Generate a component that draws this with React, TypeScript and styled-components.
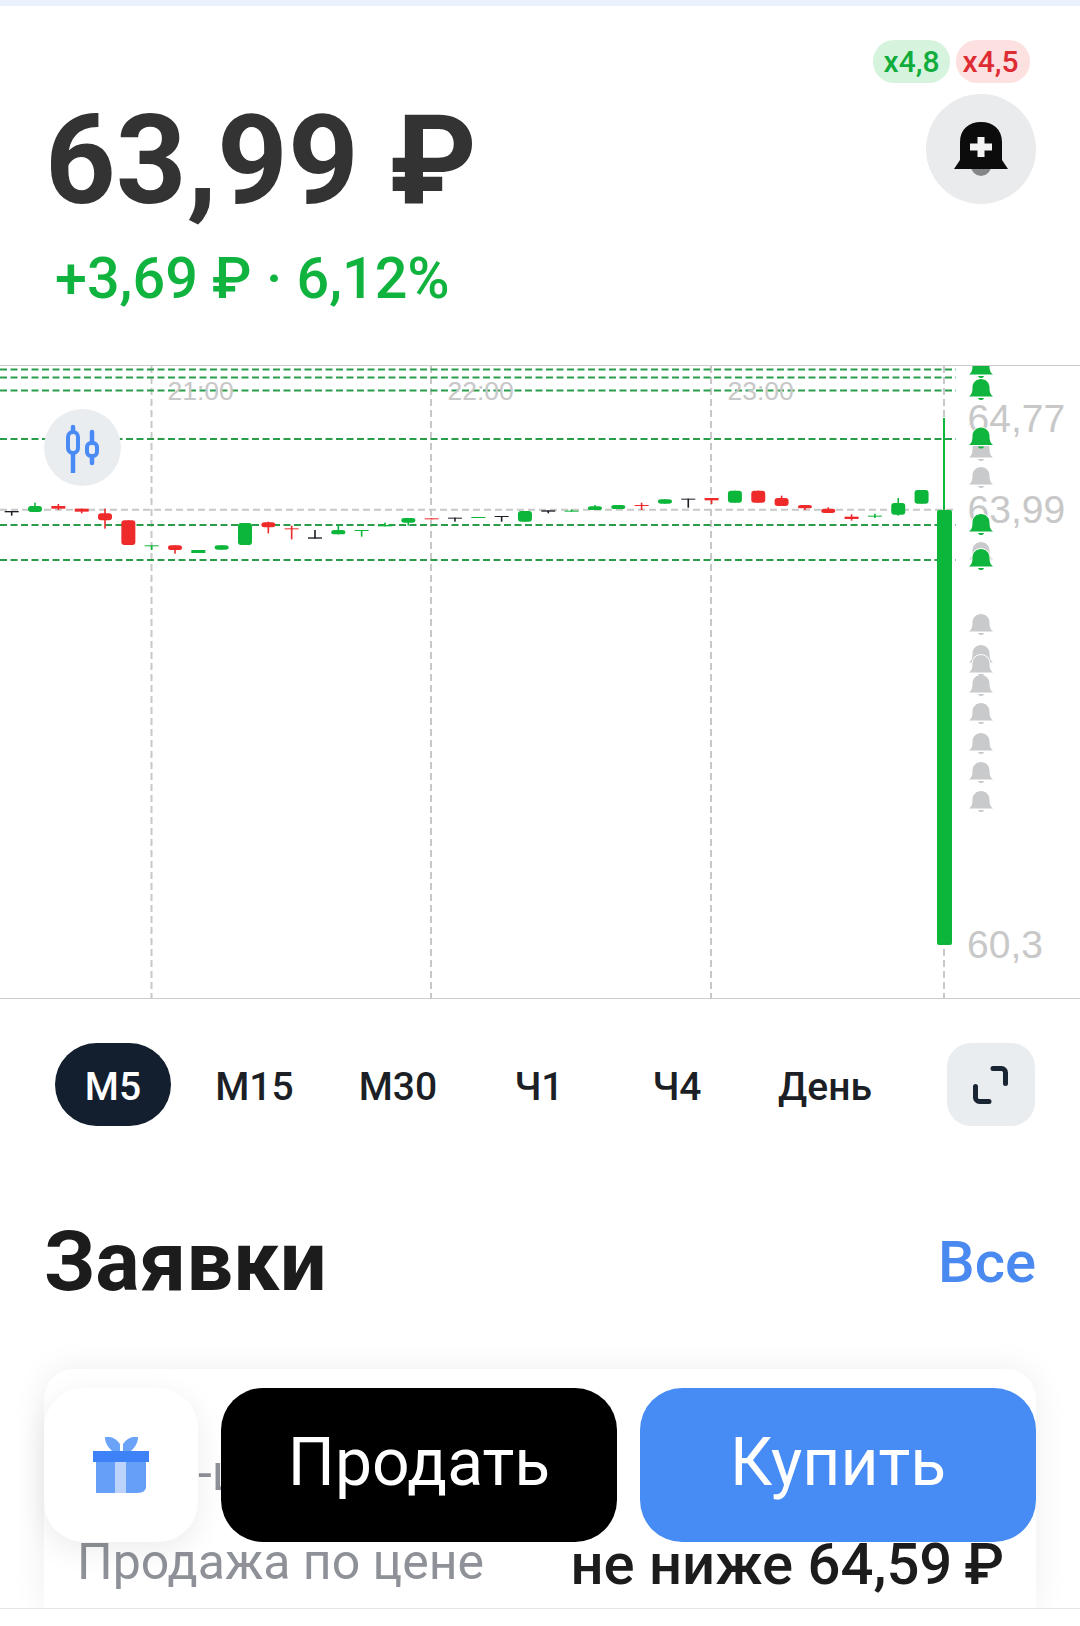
import styled, { createGlobalStyle } from "styled-components";

const GlobalStyle = createGlobalStyle`
  html, body {
    margin: 0;
    padding: 0;
    background: #fff;
  }
  * {
    box-sizing: border-box;
  }
`;

const GREEN = "#0cb63a";
const RED = "#ee2a2a";
const BLACK = "#1c1f26";
const BELL_GREEN = "#0fb53c";
const BELL_GREY = "#c9cacc";

// [index, colour, wick top, wick bottom, body top, body bottom]; y in 1/3 px from 350
type Candle = [number, string, number, number, number, number];
const candles: Candle[] = [
  [0, BLACK, 483, 497, 483, 487],
  [1, GREEN, 458, 486, 468, 486],
  [2, RED, 462, 480, 468, 476],
  [3, RED, 476, 490, 476, 485],
  [4, RED, 476, 536, 490, 511],
  [5, RED, 511, 585, 511, 585],
  [6, GREEN, 586, 600, 586, 589],
  [7, RED, 586, 611, 586, 600],
  [8, GREEN, 600, 609, 600, 609],
  [9, GREEN, 586, 599, 586, 599],
  [10, GREEN, 519, 585, 519, 585],
  [11, RED, 515, 550, 517, 532],
  [12, RED, 527, 568, 535, 538],
  [13, BLACK, 540, 566, 562, 566],
  [14, GREEN, 525, 553, 540, 553],
  [15, GREEN, 540, 560, 540, 543],
  [16, GREEN, 518, 529, 525, 529],
  [17, GREEN, 504, 527, 504, 518],
  [18, RED, 505, 508, 505, 508],
  [19, BLACK, 503, 515, 503, 506],
  [20, GREEN, 501, 504, 501, 504],
  [21, BLACK, 498, 515, 498, 501],
  [22, GREEN, 483, 515, 483, 515],
  [23, BLACK, 481, 490, 481, 485],
  [24, GREEN, 478, 485, 482, 485],
  [25, GREEN, 465, 480, 469, 480],
  [26, GREEN, 465, 477, 465, 477],
  [27, RED, 458, 480, 465, 468],
  [28, GREEN, 448, 461, 448, 461],
  [29, BLACK, 446, 473, 446, 449],
  [30, RED, 444, 462, 444, 451],
  [31, GREEN, 422, 458, 422, 458],
  [32, RED, 422, 458, 422, 458],
  [33, RED, 437, 468, 444, 468],
  [34, RED, 465, 480, 465, 475],
  [35, RED, 472, 489, 476, 489],
  [36, RED, 493, 512, 500, 507],
  [37, GREEN, 491, 504, 497, 500],
  [38, GREEN, 444, 497, 459, 494],
  [39, GREEN, 420, 461, 420, 461],
];

const greenLines = [369.5, 377.5, 390.5, 439, 525, 560];
const gridLines = [151.5, 431, 711];
const greyBells = [440, 467, 542, 614, 645, 675, 655, 703, 733, 762, 791];
const greenBells = [357, 379, 427.5, 514, 549];
const tabs = ["М5", "М15", "М30", "Ч1", "Ч4", "День"];

const Bell = ({ top, color }: { top: number; color: string }) => (
  <g transform={`translate(981 ${top})`}>
    <path
      d="M-12 17.500c3-2 3.500-5 3.500-9C-8.500 3.500-4.500 0 0 0s8.500 3.500 8.500 8.500c0 4 .5 7 3.500 9z"
      fill={color}
      stroke="#fff"
      strokeWidth="2"
      paintOrder="stroke"
    />
    <path d="M-3 19h6c-.5 1.500-1.500 2-3 2s-2.500-.5-3-2z" fill={color} />
  </g>
);

const Chart = () => (
  <ChartSvg viewBox="0 366 1080 632">
    {gridLines.map((x) => (
      <GridLine key={x} x1={x} x2={x} y1={366} y2={998} />
    ))}
    <GridLine x1={944} x2={944} y1={366} y2={998} />
    <GridLine x1={0} x2={956} y1={509.7} y2={509.7} />
    {greenLines.map((y) => (
      <LevelLine key={y} x1={0} x2={956} y1={y} y2={y} />
    ))}
    <AxisText x={167.500} y={400} $size={26.5}>21:00</AxisText>
    <AxisText x={447.500} y={400} $size={26.5}>22:00</AxisText>
    <AxisText x={727.500} y={400} $size={26.5}>23:00</AxisText>
    <AxisText x={967.500} y={432} $size={39}>64,77</AxisText>
    <AxisText x={967.500} y={523} $size={39}>63,99</AxisText>
    <AxisText x={967} y={958} $size={39}>60,3</AxisText>
    {candles.map(([i, color, wt, wb, bt, bb]) => {
      const x = 11.7 + i * 23.33;
      const h = (bb - bt) / 3;
      return (
        <g key={i} fill={color}>
          <rect x={x - 0.8} y={350 + wt / 3} width={1.6} height={(wb - wt) / 3} />
          <rect x={x - 7} y={350 + bt / 3} width={14} height={h} rx={h > 3 ? 3 : 0} />
        </g>
      );
    })}
    <rect x={943} y={418} width={2} height={95} fill={GREEN} />
    <rect x={937} y={510} width={15} height={435} rx={2} fill={GREEN} />
    {greyBells.map((top) => (
      <Bell key={top} top={top} color={BELL_GREY} />
    ))}
    {greenBells.map((top) => (
      <Bell key={top} top={top} color={BELL_GREEN} />
    ))}
  </ChartSvg>
);

const App = () => (
  <Page>
    <GlobalStyle />
    <TopStrip />
    <Header>
      <Quote>
        <Price>63,99 ₽</Price>
        <Change>+3,69 ₽ · 6,12%</Change>
      </Quote>
      <Side>
        <Badges>
          <Badge $up>x4,8</Badge>
          <Badge>x4,5</Badge>
        </Badges>
        <BellButton>
          <svg width="60" height="60" viewBox="0 0 60 60">
            <circle cx="30" cy="47" r="10" fill="#858687" />
            <path
              d="M3 50l6-9V23C9 10 18 3 30 3s21 7 21 20v18l6 9z"
              fill="#0c0c0c"
            />
            <path d="M26.500 18h7v6.500H41v7h-7.500V38h-7v-6.500H19v-7h7.500z" fill="#f4f4f4" />
          </svg>
        </BellButton>
      </Side>
    </Header>
    <ChartArea>
      <Chart />
      <ChartTypeButton>
        <svg width="40" height="50" viewBox="0 0 40 50">
          <g fill="none" stroke="#4a8af4" strokeLinecap="round">
            <path d="M10 4v45" strokeWidth="4.500" />
            <rect x="5" y="9" width="10" height="21" rx="5" fill="#eaedf0" strokeWidth="4" />
            <path d="M29 9v31" strokeWidth="4.500" />
            <rect x="24" y="20" width="10" height="13" rx="4" fill="#eaedf0" strokeWidth="4" />
          </g>
        </svg>
      </ChartTypeButton>
    </ChartArea>
    <TabsRow>
      <TabsGrid>
        {tabs.map((tab, i) => (
          <Tab key={tab} $active={i === 0}>
            {tab}
          </Tab>
        ))}
      </TabsGrid>
      <ExpandButton>
        <svg width="44" height="44" viewBox="0 0 44 44">
          <path
            d="M24 5.500h8.500a4 4 0 0 1 4 4v11M20 38.500h-9.500a4 4 0 0 1-4-4v-11"
            fill="none"
            stroke="#1a2533"
            strokeWidth="5"
            strokeLinecap="round"
          />
        </svg>
      </ExpandButton>
    </TabsRow>
    <OrdersHead>
      <OrdersTitle>Заявки</OrdersTitle>
      <AllLink>Все</AllLink>
    </OrdersHead>
    <OrderCard>
      <OrderRow>
        <OrderLabel $indent={8}>Стоп-цена</OrderLabel>
      </OrderRow>
      <OrderRow>
        <OrderLabel>Продажа по цене</OrderLabel>
        <OrderValue>не ниже 64,59{"\u2009"}₽</OrderValue>
      </OrderRow>
    </OrderCard>
    <FooterLine />
    <ActionBar>
      <GiftTile>
        <svg width="56" height="56" viewBox="0 0 56 56">
          <path d="M12 0c5-1 11 1 15 7v7h-8C15 10 12 6 12 0z" fill="#6ba3f9" />
          <path d="M45 0c-5-1-11 1-15 7v7h8c4-4 7-8 7-14z" fill="#6ba3f9" />
          <path d="M3 25h50v25c0 3-3 6-9 6H3z" fill="#659ff8" />
          <rect x="22" y="25" width="11" height="31" fill="#bcd3fb" />
          <rect y="14" width="56" height="11" fill="#3d82f7" />
        </svg>
      </GiftTile>
      <SellButton>Продать</SellButton>
      <BuyButton>Купить</BuyButton>
    </ActionBar>
  </Page>
);

const Page = styled.div`
  position: relative;
  width: 1080px;
  height: 1626px;
  overflow: hidden;
  background: #fff;
  font-family: Roboto, "Noto Sans", sans-serif;
`;

const TopStrip = styled.div`
  height: 6px;
  background: #eaf1fd;
`;

const Header = styled.header`
  display: flex;
  justify-content: space-between;
  height: 359px;
  padding: 0 44px 0 45px;
`;

const Quote = styled.div`
  padding-top: 92px;
`;

const Price = styled.div`
  font-size: 123.5px;
  line-height: 125px;
  font-weight: 700;
  color: #333;
  white-space: nowrap;
`;

const Change = styled.div`
  margin: 21px 0 0 10px;
  font-size: 57.5px;
  line-height: 70px;
  font-weight: 500;
  color: #11b33f;
  white-space: nowrap;
`;

const Side = styled.div`
  display: flex;
  flex-direction: column;
  align-items: flex-end;
  padding-top: 34px;
`;

const Badges = styled.div`
  display: flex;
  gap: 6px;
  margin-right: 6px;
`;

const Badge = styled.span<{ $up?: boolean }>`
  display: flex;
  align-items: center;
  justify-content: center;
  width: ${(p) => (p.$up ? 77 : 74)}px;
  height: 43px;
  padding-right: ${(p) => (p.$up ? 0 : 5)}px;
  border-radius: 21px;
  font-size: 30px;
  font-weight: 500;
  color: ${(p) => (p.$up ? "#10ac3c" : "#dd2c33")};
  background: ${(p) => (p.$up ? "#d6f3dd" : "#fde0e0")};
`;

const BellButton = styled.div`
  display: flex;
  align-items: center;
  justify-content: center;
  width: 110px;
  height: 110px;
  margin-top: 11px;
  border-radius: 50%;
  background: #e9ebed;
`;

const ChartArea = styled.section`
  position: relative;
  height: 634px;
  border-top: 1px solid #ccc;
  border-bottom: 1px solid #ccc;
`;

const ChartSvg = styled.svg`
  display: block;
  width: 1080px;
  height: 632px;
`;

const GridLine = styled.line`
  stroke: #c8c8c8;
  stroke-width: 2;
  stroke-dasharray: 7 4;
`;

const LevelLine = styled.line`
  stroke: #2a9d4a;
  stroke-width: 2;
  stroke-dasharray: 7 3.5;
`;

const AxisText = styled.text<{ $size: number }>`
  font-family: "Liberation Sans", Arial, sans-serif;
  font-size: ${(p) => p.$size}px;
  fill: #c8c8c8;
`;

const ChartTypeButton = styled.div`
  position: absolute;
  left: 44px;
  top: 43px;
  display: flex;
  align-items: center;
  justify-content: center;
  width: 77px;
  height: 77px;
  border-radius: 50%;
  background: #eaedf0;
`;

const TabsRow = styled.div`
  display: flex;
  align-items: center;
  justify-content: space-between;
  margin-top: 44px;
  padding: 0 45px 0 42px;
`;

const TabsGrid = styled.div`
  display: grid;
  grid-template-columns: 142px 141px 146px 136px 140px 156px;
`;

const Tab = styled.div<{ $active?: boolean }>`
  justify-self: center;
  display: flex;
  align-items: center;
  justify-content: center;
  width: 116px;
  height: 83px;
  padding-top: 4px;
  border-radius: 42px;
  font-size: 39px;
  font-weight: 500;
  color: ${(p) => (p.$active ? "#fff" : "#1c1f26")};
  background: ${(p) => (p.$active ? "#131f2e" : "transparent")};
`;

const ExpandButton = styled.div`
  display: flex;
  align-items: center;
  justify-content: center;
  width: 88px;
  height: 83px;
  border-radius: 24px;
  background: #eaedf0;
`;

const OrdersHead = styled.div`
  display: flex;
  align-items: center;
  justify-content: space-between;
  margin-top: 86px;
  padding: 0 44px;
`;

const OrdersTitle = styled.h2`
  margin: 0;
  font-size: 83px;
  line-height: 100px;
  font-weight: 700;
  color: #1c1c1c;
`;

const AllLink = styled.span`
  font-size: 58px;
  line-height: 66px;
  font-weight: 500;
  color: #4a8af0;
`;

const OrderCard = styled.div`
  display: flex;
  flex-direction: column;
  gap: 29px;
  height: 239px;
  margin: 57px 44px 0;
  padding: 74px 32px 0 33px;
  border-radius: 30px 30px 0 0;
  background: #fff;
  box-shadow: 0 0 34px rgba(0, 0, 0, 0.07);
`;

const OrderRow = styled.div`
  display: flex;
  align-items: flex-start;
  justify-content: space-between;
`;

const OrderLabel = styled.span<{ $indent?: number }>`
  margin-left: ${(p) => p.$indent ?? 0}px;
  font-size: 50px;
  line-height: 60px;
  color: #8e9198;
`;

const OrderValue = styled.span`
  font-size: 58px;
  line-height: 64px;
  font-weight: 500;
  color: #1c1c1c;
  white-space: nowrap;
`;

const FooterLine = styled.div`
  position: absolute;
  left: 0;
  right: 0;
  bottom: 0;
  height: 18px;
  border-top: 1px solid #e6e6e6;
  background: #fff;
`;

const ActionBar = styled.div`
  position: absolute;
  left: 44px;
  right: 44px;
  bottom: 84px;
  display: flex;
  gap: 23px;
  height: 154px;
`;

const GiftTile = styled.div`
  flex: none;
  display: flex;
  align-items: center;
  justify-content: center;
  width: 154px;
  border-radius: 40px;
  background: #fff;
  box-shadow: 0 8px 30px rgba(0, 0, 0, 0.08);
`;

const SellButton = styled.div`
  flex: 1;
  display: flex;
  align-items: center;
  justify-content: center;
  padding-bottom: 6px;
  border-radius: 42px;
  font-size: 66px;
  color: #fff;
  background: #000;
`;

const BuyButton = styled(SellButton)`
  background: #478cf5;
`;

export default App;
